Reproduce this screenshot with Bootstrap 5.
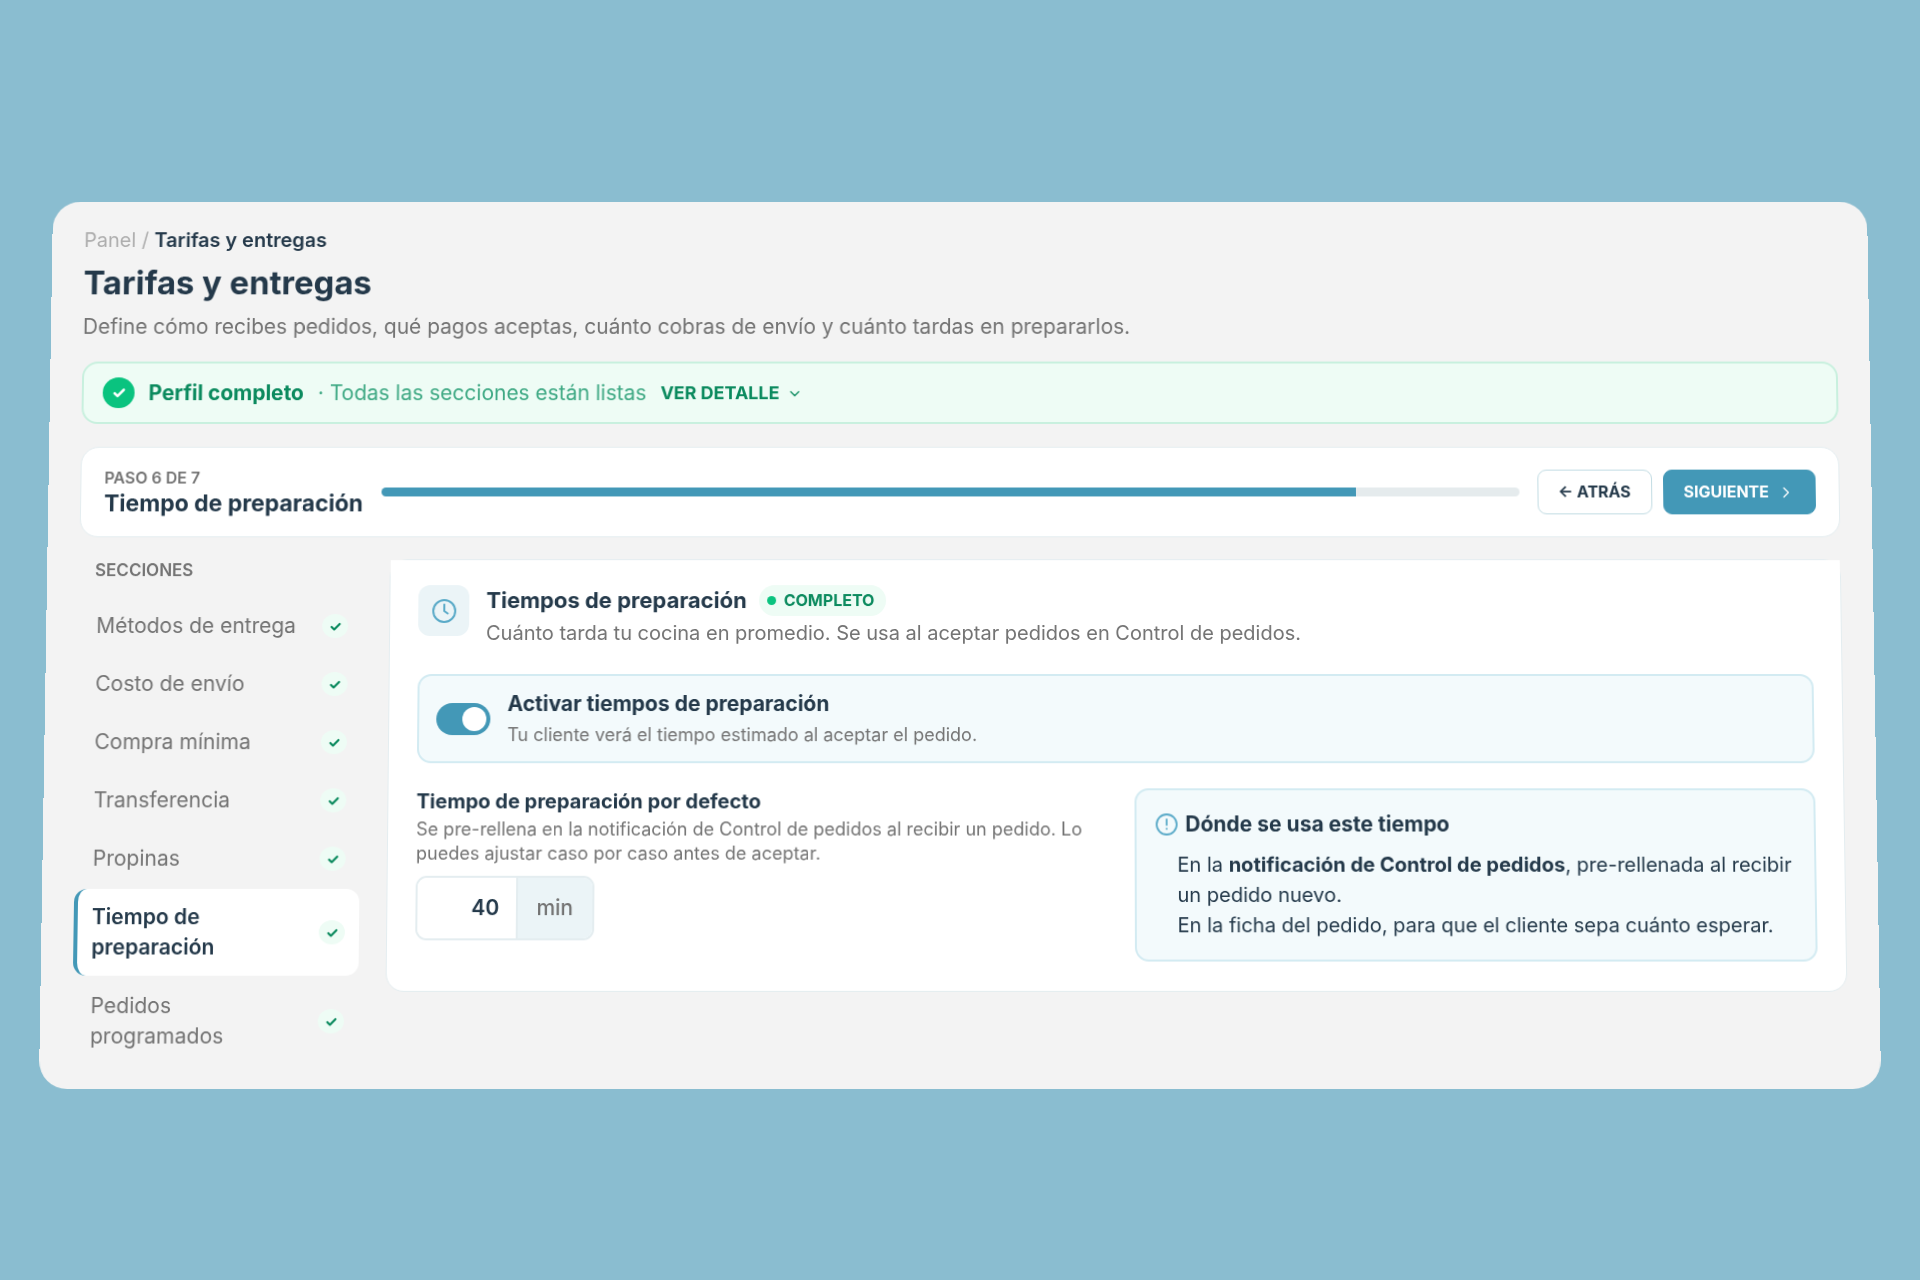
<!DOCTYPE html>
<html lang="es">
<head>
<meta charset="utf-8">
<meta name="viewport" content="width=device-width, initial-scale=1">
<title>Tarifas y entregas</title>
<link href="https://cdn.jsdelivr.net/npm/bootstrap@5.3.0/dist/css/bootstrap.min.css" rel="stylesheet">
<style>
:root { --ink: #24394a; --soft: #737373; --brand: #4398b7; --green: #0b8a5e; --mint: #eefcf5; --line: #e4edf0; --ice: #f3fafc; --ice-line: #d3ebf2; }
body { background: #8abdd0; font-family: Inter, "Open Sans", sans-serif; color: var(--ink); }
.stage { min-height: 100vh; padding: 4px 46px 0; }
/* the board leans back slightly, its top edge further away */
.board { background: #f3f3f3; border-radius: 28px; padding: 24px 32px; transform: perspective(2000px) rotateX(2deg); }
a { text-decoration: none; }
.ink { color: var(--ink); }
.soft { color: var(--soft); }
.crumbs { font-size: 20px; line-height: 30px; color: #adadad; }
.crumbs a { color: inherit; }
.page-title { font-size: 33px; line-height: 44px; margin: 6px 0 8px; }
.page-lead { font-size: 21px; line-height: 30px; margin-bottom: 20px; }
.status { background: var(--mint); border: 2px solid #c8f0de; border-radius: 16px; padding: 14px 19px; margin-bottom: 23px; gap: 14px; font-size: 21px; line-height: 31px; color: #3fa984; }
.status strong, .status button { color: var(--green); }
.status button { font-size: 18px; line-height: 31px; }
.status-dot { width: 32px; height: 31px; background: #0ac37f; }
.stepper { background: #fff; border: 1px solid var(--line); border-radius: 18px; padding: 18px 23px; margin-bottom: 22px; gap: 18px; }
.step-count { font-size: 16px; line-height: 24px; }
.step-name { font-size: 23px; line-height: 29px; }
.track { height: 9px; background: #e5ebed; --bs-progress-bar-bg: var(--brand); border-radius: 5px; }
.acts { gap: 11px; }
.act { font-size: 16px; line-height: 23px; padding: 10px 20px; border-radius: 9px; border: 1px solid #c2dce3; }
.act-next { background: var(--brand); border-color: var(--brand); color: #fff; }
.layout { gap: 27px; }
.side { flex: 0 0 284px; }
.side-title { font-size: 17px; line-height: 22px; margin: 0 0 17px; padding-left: 16px; }
.side .nav { gap: 2px; }
.side .nav-link { color: var(--soft); font-size: 21px; line-height: 30px; padding: 13px 14px; border-left: 4px solid transparent; border-radius: 13px; }
.side .nav-link.active { background: #fff; color: var(--ink); font-weight: 600; border-left-color: var(--brand); }
.tick { flex: none; width: 26px; height: 24px; background: var(--mint); }
.pane { background: #fff; border: 1px solid var(--line); border-radius: 18px; min-width: 0; align-self: flex-start; }
.pane-head { background: #fff; padding: 25px 28px 0; gap: 17px; }
.pane-body { padding: 27px 28px 29px; }
.tile { width: 51px; height: 51px; background: #ebf4f7; border-radius: 12px; }
.title-row { gap: 12px; }
.pane-title { font-size: 22px; line-height: 31px; }
.pane-text { font-size: 20px; line-height: 28px; margin-top: 3px; }
.pill { background: var(--mint); color: var(--green); font-size: 16px; line-height: 31px; padding: 0 12px 0 8px; gap: 8px; }
.pill i { width: 9px; height: 9px; background: #0ac37f; }
.callout { background: var(--ice); border: 2px solid var(--ice-line); border-radius: 14px; }
.toggle-row { padding: 12px 17px; gap: 17px; margin-bottom: 25px; }
.toggle-row label { font-size: 21px; line-height: 32px; }
.toggle-row .hint { font-size: 18px; line-height: 29px; }
.toggle-row .form-check-input { width: 54px; height: 32px; margin: 0; border: 0; }
.form-check-input:checked { background-color: var(--brand); }
.fields { display: grid; grid-template-columns: 1fr 1fr; gap: 36px; }
.fields label { display: block; font-size: 20px; line-height: 26px; margin-bottom: 3px; }
.fields .hint { font-size: 18px; line-height: 24px; margin-bottom: 10px; }
.minutes { width: 178px; border: 2px solid var(--line); border-radius: 11px; overflow: hidden; }
.minutes .form-control { border: 0; border-right: 2px solid var(--line); font-size: 21px; line-height: 32px; padding: 14px 17px; font-weight: 600; color: var(--ink); appearance: textfield; }
.minutes .form-control::-webkit-inner-spin-button { appearance: none; }
.minutes .input-group-text { border: 0; background: #ebf4f7; color: var(--soft); font-size: 21px; font-weight: 500; padding: 0 19px; }
.info { padding: 19px; }
.info h3 { font-size: 21px; line-height: 30px; margin-bottom: 10px; gap: 8px; }
.info ul { font-size: 20px; line-height: 30px; padding-left: 22px; }
</style>
</head>
<body>
<svg class="d-none">
  <symbol id="check" viewBox="0 0 12 12"><path d="M2.3 6.4l2.4 2.3L9.7 3.6" fill="none" stroke="currentColor" stroke-width="2" stroke-linecap="round" stroke-linejoin="round"/></symbol>
</svg>
<div class="stage d-flex flex-column justify-content-center">
<main class="board">
  <nav class="crumbs" aria-label="Ruta"><a href="#">Panel</a> / <span class="ink fw-semibold">Tarifas y entregas</span></nav>
  <h1 class="page-title fw-bold">Tarifas y entregas</h1>
  <p class="page-lead soft">Define cómo recibes pedidos, qué pagos aceptas, cuánto cobras de envío y cuánto tardas en prepararlos.</p>

  <div class="status d-flex align-items-center">
    <span class="status-dot rounded-circle d-flex align-items-center justify-content-center text-white"><svg width="15" height="15"><use href="#check"/></svg></span>
    <strong>Perfil completo</strong>
    <span>· Todas las secciones están listas</span>
    <button type="button" class="btn p-0 border-0 fw-bold d-flex align-items-center gap-2">VER DETALLE
      <svg width="14" height="14" viewBox="0 0 14 14" fill="none" stroke="currentColor" stroke-width="1.3" stroke-linecap="round" stroke-linejoin="round"><path d="M3 5.5l4 4 4-4"/></svg></button>
  </div>

  <section class="stepper d-flex align-items-center">
    <div class="flex-shrink-0">
      <div class="step-count soft fw-semibold">PASO 6 DE 7</div>
      <div class="step-name fw-bold">Tiempo de preparación</div>
    </div>
    <div class="progress track flex-grow-1" role="progressbar" aria-label="Progreso" aria-valuenow="6" aria-valuemin="0" aria-valuemax="7"><div class="progress-bar" style="width:85.7%"></div></div>
    <div class="acts d-flex flex-shrink-0">
      <button type="button" class="btn act bg-white ink fw-bold">← ATRÁS</button>
      <button type="button" class="btn act act-next fw-bold d-flex align-items-center gap-2">SIGUIENTE
        <svg width="18" height="14" viewBox="0 0 18 14" fill="none" stroke="currentColor" stroke-width="1.3" stroke-linecap="round" stroke-linejoin="round"><path d="M7 2.5L11.5 7 7 11.5"/></svg></button>
    </div>
  </section>

  <div class="layout d-flex">
    <aside class="side">
      <h2 class="side-title soft fw-semibold">SECCIONES</h2>
      <nav class="nav flex-column" aria-label="Secciones">
        <a class="nav-link d-flex align-items-center justify-content-between gap-3" href="#">Métodos de entrega<span class="tick rounded-circle d-flex align-items-center justify-content-center"><svg width="13" height="13" color="#0b8a5e"><use href="#check"/></svg></span></a>
        <a class="nav-link d-flex align-items-center justify-content-between gap-3" href="#">Costo de envío<span class="tick rounded-circle d-flex align-items-center justify-content-center"><svg width="13" height="13" color="#0b8a5e"><use href="#check"/></svg></span></a>
        <a class="nav-link d-flex align-items-center justify-content-between gap-3" href="#">Compra mínima<span class="tick rounded-circle d-flex align-items-center justify-content-center"><svg width="13" height="13" color="#0b8a5e"><use href="#check"/></svg></span></a>
        <a class="nav-link d-flex align-items-center justify-content-between gap-3" href="#">Transferencia<span class="tick rounded-circle d-flex align-items-center justify-content-center"><svg width="13" height="13" color="#0b8a5e"><use href="#check"/></svg></span></a>
        <a class="nav-link d-flex align-items-center justify-content-between gap-3" href="#">Propinas<span class="tick rounded-circle d-flex align-items-center justify-content-center"><svg width="13" height="13" color="#0b8a5e"><use href="#check"/></svg></span></a>
        <a class="nav-link active d-flex align-items-center justify-content-between gap-3" href="#" aria-current="step"><span>Tiempo de<br>preparación</span><span class="tick rounded-circle d-flex align-items-center justify-content-center"><svg width="13" height="13" color="#0b8a5e"><use href="#check"/></svg></span></a>
        <a class="nav-link d-flex align-items-center justify-content-between gap-3" href="#"><span>Pedidos<br>programados</span><span class="tick rounded-circle d-flex align-items-center justify-content-center"><svg width="13" height="13" color="#0b8a5e"><use href="#check"/></svg></span></a>
      </nav>
    </aside>

    <section class="pane flex-grow-1">
      <header class="pane-head d-flex align-items-start">
        <span class="tile flex-shrink-0 d-flex align-items-center justify-content-center"><svg width="24" height="24" viewBox="0 0 24 24" fill="none" stroke="#5aaac8" stroke-width="2" stroke-linecap="round" stroke-linejoin="round"><circle cx="12" cy="12" r="11"/><path d="M12 5.5V12l3.5 2.5"/></svg></span>
        <div>
          <div class="title-row d-flex align-items-center">
            <h2 class="pane-title fw-bold mb-0">Tiempos de preparación</h2>
            <span class="pill rounded-pill fw-bold d-inline-flex align-items-center"><i class="rounded-circle"></i>COMPLETO</span>
          </div>
          <p class="pane-text soft mb-0">Cuánto tarda tu cocina en promedio. Se usa al aceptar pedidos en Control de pedidos.</p>
        </div>
      </header>
      <div class="pane-body">
        <div class="callout toggle-row d-flex align-items-center">
          <div class="form-switch p-0 m-0 d-flex"><input class="form-check-input" type="checkbox" role="switch" id="activar" aria-describedby="activar-nota" checked></div>
          <div>
            <label for="activar" class="fw-bold d-block">Activar tiempos de preparación</label>
            <div id="activar-nota" class="hint soft">Tu cliente verá el tiempo estimado al aceptar el pedido.</div>
          </div>
        </div>
        <div class="fields">
          <div>
            <label for="minutos" class="fw-bold">Tiempo de preparación por defecto</label>
            <p class="hint soft">Se pre-rellena en la notificación de Control de pedidos al recibir un pedido. Lo puedes ajustar caso por caso antes de aceptar.</p>
            <div class="input-group minutes flex-nowrap">
              <input type="number" class="form-control text-end" id="minutos" value="40">
              <span class="input-group-text">min</span>
            </div>
          </div>
          <div class="callout info">
            <h3 class="fw-bold d-flex align-items-center"><svg width="22" height="22" viewBox="0 0 22 22" fill="none" stroke="#5aaac8" stroke-width="1.8" stroke-linecap="round"><circle cx="11" cy="11" r="10"/><path d="M11 6v5.5M11 15.2v.2"/></svg>Dónde se usa este tiempo</h3>
            <ul class="list-unstyled mb-0">
              <li>En la <strong>notificación de Control de pedidos</strong>, pre-rellenada al recibir un pedido nuevo.</li>
              <li>En la ficha del pedido, para que el cliente sepa cuánto esperar.</li>
            </ul>
          </div>
        </div>
      </div>
    </section>
  </div>
</main>
</div>
<script src="https://cdn.jsdelivr.net/npm/bootstrap@5.3.0/dist/js/bootstrap.bundle.min.js"></script>
</body>
</html>
